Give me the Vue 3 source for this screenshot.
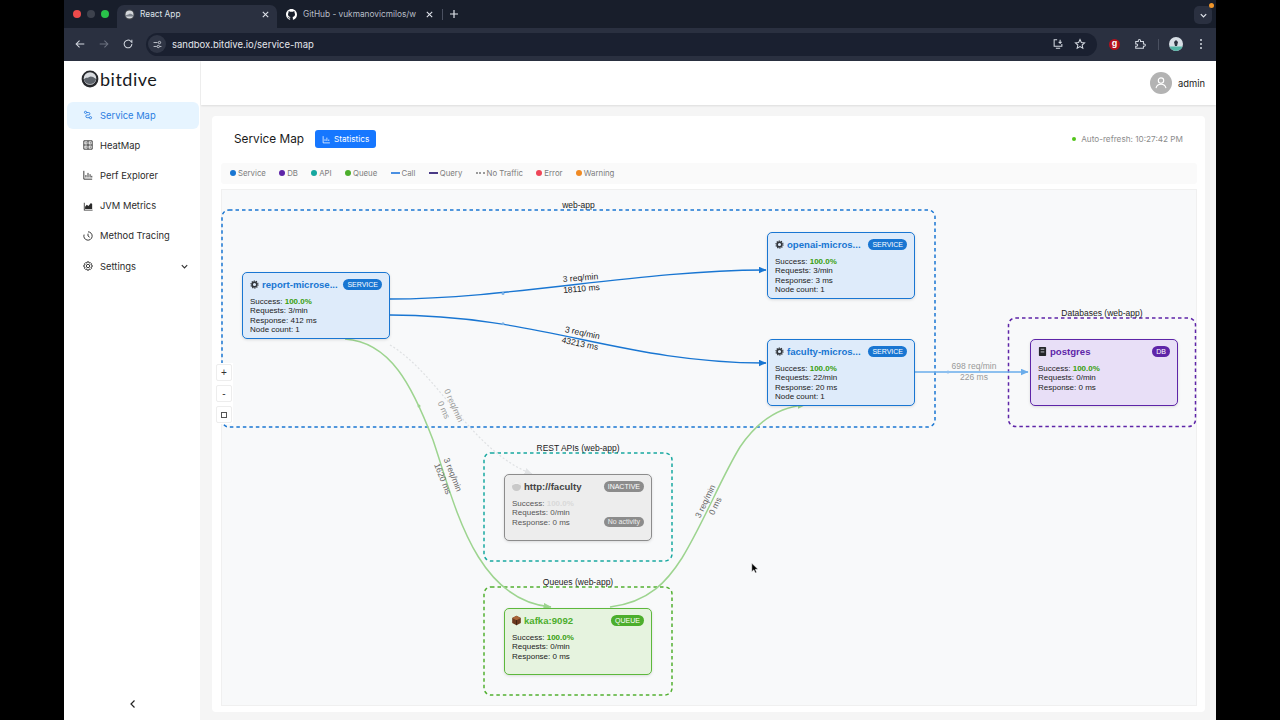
<template>
  <div class="screen">
    <div class="window">
      <div class="tabstrip">
        <div class="lights">
          <span class="light red"></span>
          <span class="light grey"></span>
          <span class="light green"></span>
        </div>
        <div class="tab active">
          <svg class="favicon" viewBox="0 0 16 16"><circle cx="8" cy="8" r="7.500" fill="#3b3f46" /><circle cx="8" cy="8" r="5.800" fill="#d5d8dc" /><path d="M2.500 9.500c2-2 3-1 4.500-2s3-1 6.500 1.500v2h-11z" fill="#7c828b" /></svg>
          <span class="tab-title">React App</span>
          <svg class="tab-x" viewBox="0 0 10 10"><path d="M2 2l6 6M8 2l-6 6" /></svg>
        </div>
        <div class="tab second">
          <svg class="favicon" viewBox="0 0 16 16"><path fill="#fff" d="M8 0C3.58 0 0 3.58 0 8c0 3.54 2.29 6.53 5.47 7.59.4.07.55-.17.55-.38 0-.19-.01-.82-.01-1.49-2.01.37-2.53-.49-2.69-.94-.09-.23-.48-.94-.82-1.13-.28-.15-.68-.52-.01-.53.63-.01 1.08.58 1.23.82.72 1.21 1.87.87 2.33.66.07-.52.28-.87.51-1.07-1.78-.2-3.64-.89-3.64-3.95 0-.87.31-1.59.82-2.15-.08-.2-.36-1.02.08-2.12 0 0 .67-.21 2.2.82.64-.18 1.32-.27 2-.27.68 0 1.36.09 2 .27 1.53-1.04 2.2-.82 2.2-.82.44 1.1.16 1.92.08 2.12.51.56.82 1.27.82 2.15 0 3.07-1.87 3.75-3.65 3.95.29.25.54.73.54 1.48 0 1.07-.01 1.93-.01 2.2 0 .21.15.46.55.38A8.013 8.013 0 0016 8c0-4.42-3.58-8-8-8z" /></svg>
          <span class="tab-title faded">GitHub - vukmanovicmilos/w</span>
          <svg class="tab-x" viewBox="0 0 10 10"><path d="M2 2l6 6M8 2l-6 6" /></svg>
        </div>
        <span class="tab-sep"></span>
        <svg class="tab-plus" viewBox="0 0 10 10"><path d="M5 1v8M1 5h8" /></svg>
        <div class="tab-menu">
          <svg viewBox="0 0 10 10"><path d="M2 3.500l3 3 3-3" /></svg>
          <span class="tab-menu-dot"></span>
        </div>
      </div>

      <div class="toolbar">
        <svg class="tool" viewBox="0 0 14 14"><path d="M12 7H2.500M6.500 3L2.500 7l4 4" /></svg>
        <svg class="tool dim" viewBox="0 0 14 14"><path d="M2 7h9.500M7.500 3l4 4-4 4" /></svg>
        <svg class="tool" viewBox="0 0 14 14"><path d="M11.500 7a4.500 4.500 0 1 1-1.300-3.200L11.500 5V2" /></svg>
        <div class="omnibox">
          <span class="site-icon">
            <svg viewBox="0 0 14 14"><path d="M2 4.500h5M10 9.500h2M2 9.500h4" /><circle cx="9.500" cy="4.500" r="1.500" /><circle cx="8" cy="9.500" r="1.500" /></svg>
          </span>
          <span class="url">sandbox.bitdive.io/service-map</span>
          <svg class="tool omni-end" viewBox="0 0 14 14"><path d="M6 2H2.500v7.500h9V7M4.500 12h5M9.500 2v4M7.800 4.500l1.700 1.700 1.700-1.700" /></svg>
          <svg class="tool star" viewBox="0 0 14 14"><path d="M7 1.800l1.600 3.500 3.700.4-2.800 2.500.8 3.700L7 10l-3.300 1.900.8-3.700-2.800-2.500 3.700-.4z" /></svg>
        </div>
        <span class="ext-g">g</span>
        <svg class="tool puzzle" viewBox="0 0 14 14"><path d="M2 4h3V3a1.300 1.300 0 0 1 2.600 0v1H11v3h1a1.300 1.300 0 0 1 0 2.600h-1V12H2V9.500h1a1.300 1.300 0 0 0 0-2.600H2z" /></svg>
        <span class="tool-sep"></span>
        <svg class="avatar-mini" viewBox="0 0 14 14"><circle cx="7" cy="7" r="7" fill="#d8dfe6" /><path d="M0.500 9.500h13A7 7 0 0 1 0.500 9.500z" fill="#55b5a6" /><path d="M7 3l2 2-1 4H6L5 5z" fill="#2d3340" /></svg>
        <span class="kebab"><i></i><i></i><i></i></span>
      </div>

      <div class="app">
        <aside class="sidebar">
          <div class="logo">
            <svg class="logo-mark" viewBox="0 0 18 18">
              <circle cx="9" cy="9" r="8.400" fill="#26282c" />
              <circle cx="9" cy="8.500" r="6.300" fill="#d9dce0" />
              <path d="M2.800 9.500c2-2.500 3.500-1 5-2.200s3.500-1.300 7.400 1.800c-.6 3-3 5-6.200 5s-5.500-2-6.200-4.600z" fill="#5d636b" />
            </svg>
            <span class="logo-text">bitdive</span>
          </div>
          <nav class="menu">
            <a v-for="item in menu" :key="item.label" class="menu-item" :class="{ active: item.active }">
              <svg class="menu-icon" :class="{ solid: item.solid }" viewBox="0 0 12 12">
                <path :d="item.icon" />
              </svg>
              <span>{{ item.label }}</span>
              <svg v-if="item.more" class="menu-more" viewBox="0 0 10 10"><path d="M2 3.500l3 3 3-3" /></svg>
            </a>
          </nav>
          <svg class="collapse" viewBox="0 0 10 10"><path d="M6.500 1.500L3 5l3.500 3.500" /></svg>
        </aside>

        <main class="main">
          <header class="topbar">
            <span class="user-avatar">
              <svg viewBox="0 0 20 20"><circle cx="10" cy="7" r="3.400" /><path d="M3.800 16.500c.6-3.500 3-5 6.200-5s5.600 1.500 6.200 5" /></svg>
            </span>
            <span class="user-name">admin</span>
          </header>

          <div class="content">
            <section class="card">
              <div class="title-row">
                <h1>Service Map</h1>
                <button class="stats-btn">
                  <svg viewBox="0 0 12 12"><path d="M1.500 1.500v9h9M4 8V5.500M6.500 8V3.500M9 8V6" /></svg>
                  Statistics
                </button>
                <span class="refresh"><i></i>Auto-refresh: 10:27:42 PM</span>
              </div>

              <div class="legend">
                <span v-for="l in legend" :key="l.label" class="legend-item">
                  <i :class="l.type" :style="{ '--c': l.color }"></i>{{ l.label }}
                </span>
              </div>

              <div class="canvas">
                <svg class="edges" viewBox="221 189 976 517">
                  <defs>
                    <marker id="blue" markerWidth="9" markerHeight="8" refX="7.500" refY="3.500" orient="auto" markerUnits="userSpaceOnUse">
                      <path d="M0 0L8 3.500L0 7z" fill="#1976d2" />
                    </marker>
                    <marker id="light" markerWidth="9" markerHeight="8" refX="7.500" refY="3.500" orient="auto" markerUnits="userSpaceOnUse">
                      <path d="M0 0L8 3.500L0 7z" fill="#6aaceb" />
                    </marker>
                    <marker id="green" markerWidth="9" markerHeight="8" refX="7.500" refY="3.500" orient="auto" markerUnits="userSpaceOnUse">
                      <path d="M0 0L8 3.500L0 7z" fill="#9dd48f" />
                    </marker>
                    <marker id="none" markerWidth="9" markerHeight="8" refX="7.500" refY="3.500" orient="auto" markerUnits="userSpaceOnUse">
                      <path d="M0 0L8 3.500L0 7z" fill="#e2e4e6" />
                    </marker>
                  </defs>

                  <g v-for="g in groups" :key="g.label">
                    <rect class="group" :x="g.x" :y="g.y" :width="g.w" :height="g.h" rx="7" :stroke="g.color" />
                    <text class="group-label" :x="g.x + g.w / 2" :y="g.y - 2.500">{{ g.label }}</text>
                  </g>

                  <path v-for="e in edges" :key="e.d" class="edge" :d="e.d" :stroke="e.color" :stroke-width="e.width" :stroke-dasharray="e.dash" :marker-end="`url(#${e.marker})`" />
                  <circle v-for="p in pulses" :key="p.x + p.y" :cx="p.x" :cy="p.y" r="1.500" :fill="p.color" />

                  <g v-for="t in edgeLabels" :key="t.top + t.x" :transform="`translate(${t.x} ${t.y}) rotate(${t.rot})`" :class="['edge-label', t.tone]">
                    <text y="-3.500">{{ t.top }}</text>
                    <text y="7.500">{{ t.bottom }}</text>
                  </g>
                </svg>

                <div
                  v-for="n in nodes"
                  :key="n.name"
                  class="node"
                  :class="n.kind"
                  :style="{ left: n.x - 221 + 'px', top: n.y - 189 + 'px' }"
                >
                  <div class="node-head">
                    <svg v-if="n.icon === 'gear'" class="node-icon" viewBox="0 0 12 12">
                      <circle cx="6" cy="6" r="3.200" fill="none" stroke="#33373d" stroke-width="2.200" />
                      <circle cx="6" cy="6" r="4.800" fill="none" stroke="#33373d" stroke-width="1.400" stroke-dasharray="1.600 1.400" />
                    </svg>
                    <svg v-else-if="n.icon === 'db'" class="node-icon big" viewBox="0 0 12 12">
                      <rect x="2" y="1" width="8" height="10" rx=".8" fill="#24262a" />
                      <path d="M4 3.500h4M4 6.500h4" stroke="#c9c9d2" stroke-width="1" />
                    </svg>
                    <svg v-else-if="n.icon === 'ball'" class="node-icon big" viewBox="0 0 12 12">
                      <circle cx="6" cy="6" r="5" fill="#c9c9c9" />
                      <path d="M1.200 5c1.500-2.500 8-2.500 9.600 0V3.500L8 1H4L1.200 3.500z" fill="#f0f0f0" />
                    </svg>
                    <svg v-else class="node-icon big" viewBox="0 0 12 12">
                      <path d="M6 .8l4.800 2.400v5.600L6 11.200 1.200 8.800V3.200z" fill="#6b3a1f" />
                      <path d="M1.200 3.200L6 5.600l4.800-2.400L6 .8z" fill="#a9683a" />
                      <path d="M6 5.600v5.600" stroke="#2f1a0d" stroke-width=".8" />
                    </svg>
                    <span class="node-name">{{ n.name }}</span>
                    <span class="badge">{{ n.badge }}</span>
                  </div>
                  <div class="node-stats">
                    <div>Success: <b>100.0%</b></div>
                    <div>Requests: {{ n.requests }}</div>
                    <div>Response: {{ n.response }}</div>
                    <div v-if="n.count">Node count: {{ n.count }}</div>
                  </div>
                  <span v-if="n.kind === 'inactive'" class="no-activity">No activity</span>
                </div>

                <div class="zoom-controls">
                  <button>+</button>
                  <button>-</button>
                  <button><span class="fit"></span></button>
                </div>

                <svg class="cursor" viewBox="0 0 10 14"><path d="M1 0.500v10.500l2.600-2.300 1.700 3.800 1.700-.8-1.700-3.700h3.400z" fill="#000" stroke="#fff" stroke-width=".6" /></svg>
              </div>
            </section>
          </div>
        </main>
      </div>
    </div>
  </div>
</template>

<script setup>
const menu = [
  { label: 'Service Map', active: true, icon: 'M3 1.500a1.300 1.300 0 1 0 0 2.600a1.300 1.300 0 1 0 0-2.600M9 7.900a1.300 1.300 0 1 0 0 2.600a1.300 1.300 0 1 0 0-2.600M4.300 3h2.500a1.500 1.500 0 0 1 0 3H5a1.500 1.500 0 0 0 0 3.200h2.700' },
  { label: 'HeatMap', icon: 'M1 1h10v10H1zM1 6h10M6 1v10M3 3.500h1.500M8 3.500h1.500M3 8.500h1.500M8 8.500h1.500' },
  { label: 'Perf Explorer', icon: 'M1 1v10h10M3.500 9V6M6 9V3.500M8.500 9V5M10.500 9V7' },
  { label: 'JVM Metrics', solid: true, icon: 'M1 2v9.500h10.500v-1H2V2zM2.500 9.500V7l2-2.500 2 1.500 3-3.500 1.500 1v6z' },
  { label: 'Method Tracing', icon: 'M6 1a5 5 0 1 1-4.700 3.300M6 3.200V6l2 1.500' },
  { label: 'Settings', more: true, icon: 'M6 4a2 2 0 1 0 0 4a2 2 0 1 0 0-4M5 1h2l.4 1.500 1.400-.6 1.400 1.400-.7 1.300L11 5v2l-1.500.4.700 1.400-1.400 1.400-1.400-.7L7 11H5l-.4-1.500-1.400.7-1.400-1.400.7-1.400L1 7V5l1.500-.4-.7-1.300 1.400-1.400 1.400.6z' }
]

const legend = [
  { label: 'Service', type: 'dot', color: '#1976d2' },
  { label: 'DB', type: 'dot', color: '#5e25a8' },
  { label: 'API', type: 'dot', color: '#17a8a0' },
  { label: 'Queue', type: 'dot', color: '#4cae2c' },
  { label: 'Call', type: 'line', color: '#4a90e2' },
  { label: 'Query', type: 'line', color: '#4a3a86' },
  { label: 'No Traffic', type: 'dots', color: '#9a9a9a' },
  { label: 'Error', type: 'dot', color: '#ee4658' },
  { label: 'Warning', type: 'dot', color: '#f08a24' }
]

const groups = [
  { label: 'web-app', x: 222, y: 210, w: 713, h: 217, color: '#1976d2' },
  { label: 'Databases (web-app)', x: 1008.500, y: 318, w: 187, h: 108.500, color: '#5e25a8' },
  { label: 'REST APIs (web-app)', x: 484, y: 453, w: 188, h: 108, color: '#17a8a0' },
  { label: 'Queues (web-app)', x: 484, y: 587, w: 188, h: 108, color: '#52b030' }
]

const edges = [
  { d: 'M390 299C510 299 640 270 766 270', color: '#1976d2', width: 1.300, marker: 'blue' },
  { d: 'M390 315C540 315 620 363 766 363', color: '#1976d2', width: 1.300, marker: 'blue' },
  { d: 'M345 339C390 342 412 385 433 440C455 505 475 600 551 607', color: '#9dd48f', width: 1.500, marker: 'green' },
  { d: 'M610 607C650 602 668 580 682 558C705 520 720 480 740 447C755 425 775 407 805 405', color: '#9dd48f', width: 1.500, marker: 'green' },
  { d: 'M390 345C440 375 470 450 532 474', color: '#dfe1e3', width: 1.200, dash: '2 2', marker: 'none' },
  { d: 'M915 372H1028', color: '#6aaceb', width: 1.600, marker: 'light' }
]

// moving traffic dots caught on the edges
const pulses = [
  { x: 503, y: 293.500, color: '#7fb4e8' },
  { x: 503, y: 323.800, color: '#7fb4e8' },
  { x: 419, y: 406, color: '#9dd48f' },
  { x: 948, y: 372, color: '#8fc0ef' }
]

const edgeLabels = [
  { x: 581, y: 284, rot: -5, top: '3 req/min', bottom: '18110 ms', tone: 'dark' },
  { x: 581, y: 339, rot: 12, top: '3 req/min', bottom: '43213 ms', tone: 'dark' },
  { x: 974, y: 372, rot: 0, top: '698 req/min', bottom: '226 ms', tone: 'soft' },
  { x: 448, y: 408, rot: 66, top: '0 req/min', bottom: '0 ms', tone: 'soft' },
  { x: 447, y: 477, rot: 68, top: '3 req/min', bottom: '1620 ms', tone: 'mid' },
  { x: 711, y: 504, rot: -64, top: '3 req/min', bottom: '0 ms', tone: 'mid' }
]

const nodes = [
  { name: 'report-microse...', kind: 'service', icon: 'gear', badge: 'SERVICE', x: 242, y: 272, requests: '3/min', response: '412 ms', count: 1 },
  { name: 'openai-micros...', kind: 'service', icon: 'gear', badge: 'SERVICE', x: 767, y: 232, requests: '3/min', response: '3 ms', count: 1 },
  { name: 'faculty-micros...', kind: 'service', icon: 'gear', badge: 'SERVICE', x: 767, y: 339, requests: '22/min', response: '20 ms', count: 1 },
  { name: 'postgres', kind: 'db', icon: 'db', badge: 'DB', x: 1030, y: 339, requests: '0/min', response: '0 ms' },
  { name: 'http://faculty', kind: 'inactive', icon: 'ball', badge: 'INACTIVE', x: 504, y: 474, requests: '0/min', response: '0 ms' },
  { name: 'kafka:9092', kind: 'queue', icon: 'box', badge: 'QUEUE', x: 504, y: 608, requests: '0/min', response: '0 ms' }
]
</script>

<style>
html,
body {
  margin: 0;
  background: #000;
}
</style>

<style scoped>
.screen {
  width: 1280px;
  height: 720px;
  background: #000;
  overflow: hidden;
  font-family: Inter, "Liberation Sans", sans-serif;
}

.window {
  width: 1152px;
  height: 720px;
  margin-left: 64px;
  display: flex;
  flex-direction: column;
  background: #f5f5f5;
}

/* browser chrome */
.tabstrip {
  height: 28px;
  flex: none;
  display: flex;
  align-items: flex-end;
  background: #181e2b;
  color: #dfe3ea;
  font-size: 8.300px;
}

.lights {
  display: flex;
  gap: 6px;
  width: 53px;
  padding: 0 0 10px 9px;
  box-sizing: border-box;
}

.light {
  width: 8px;
  height: 8px;
  border-radius: 50%;
}

.red { background: #ee4b4b; }
.grey { background: #3d424d; }
.green { background: #29c34a; }

.tab {
  width: 160px;
  height: 23px;
  display: flex;
  align-items: center;
  box-sizing: border-box;
  padding: 0 7px 5px 7px;
  gap: 5px;
}

.tab.active {
  background: #2a3040;
  border-radius: 7px 7px 0 0;
}

.tab.second {
  width: 163px;
  padding: 0 6px 5px 9px;
  gap: 6px;
}

.favicon {
  width: 11px;
  height: 11px;
  flex: none;
}

.tab-title {
  flex: 1;
  min-width: 0;
  white-space: nowrap;
}

.tab-title.faded {
  color: #b9bec8;
  font-size: 8.300px;
}

.tab-x {
  width: 9px;
  height: 9px;
  flex: none;
  fill: none;
  stroke: #dfe3ea;
  stroke-width: 1.200;
}

.tab-sep {
  width: 1px;
  height: 11px;
  background: #4a5060;
  margin: 0 6px 8px 2px;
}

.tab-plus {
  width: 10px;
  height: 10px;
  margin-bottom: 9px;
  fill: none;
  stroke: #dfe3ea;
  stroke-width: 1.200;
}

.tab-menu {
  position: relative;
  width: 18px;
  height: 18px;
  margin: 0 4px 4px auto;
  border-radius: 5px;
  background: #2a3040;
  display: flex;
  align-items: center;
  justify-content: center;
}

.tab-menu svg {
  width: 9px;
  height: 9px;
  fill: none;
  stroke: #dfe3ea;
  stroke-width: 1.400;
}

.tab-menu-dot {
  position: absolute;
  top: -3px;
  right: -2px;
  width: 5px;
  height: 5px;
  border-radius: 50%;
  background: #f0962b;
}

.toolbar {
  height: 33px;
  flex: none;
  display: flex;
  align-items: center;
  box-sizing: border-box;
  padding: 0 10px 1px;
  background: #2a3040;
  gap: 12px;
}

.tool {
  width: 12px;
  height: 12px;
  flex: none;
  fill: none;
  stroke: #d3d8e0;
  stroke-width: 1.200;
}

.tool.dim {
  stroke: #6c7280;
}

.omnibox {
  width: 951px;
  height: 23px;
  flex: none;
  display: flex;
  align-items: center;
  gap: 8px;
  border-radius: 12px;
  background: #1a2030;
  color: #e4e7ec;
  font-size: 9.500px;
}

.site-icon {
  width: 18px;
  height: 18px;
  margin: 0 -2px 0 2px;
  border-radius: 50%;
  background: #2f3545;
  display: flex;
  align-items: center;
  justify-content: center;
}

.site-icon svg {
  width: 11px;
  height: 11px;
  fill: none;
  stroke: #dfe3ea;
  stroke-width: 1;
}

.url {
  flex: 1;
}

.omni-end {
  margin-right: 2px;
}

.star {
  margin-right: 11px;
}

.ext-g {
  width: 11px;
  height: 11px;
  flex: none;
  border-radius: 50%;
  background: #b3101c;
  color: #fff;
  font: bold 9px/9px "Liberation Sans", sans-serif;
  text-align: center;
}

.puzzle {
  margin-left: 2px;
}

.tool-sep {
  width: 1px;
  height: 11px;
  background: #4a5060;
}

.avatar-mini {
  width: 14px;
  height: 14px;
  flex: none;
  margin-left: -2px;
}

.kebab {
  display: flex;
  flex-direction: column;
  gap: 2px;
  margin-left: 5px;
}

.kebab i {
  width: 2px;
  height: 2px;
  border-radius: 50%;
  background: #d3d8e0;
}

/* app */
.app {
  flex: 1;
  display: flex;
  min-height: 0;
}

.sidebar {
  position: relative;
  width: 136px;
  flex: none;
  background: #fff;
  box-sizing: border-box;
  padding: 0 1px 0 3px;
  display: flex;
  flex-direction: column;
}

.logo {
  height: 41px;
  flex: none;
  display: flex;
  align-items: center;
  gap: 1px;
  padding: 0 0 5px 14px;
  box-sizing: border-box;
}

.logo-mark {
  width: 18px;
  height: 18px;
}

.logo-text {
  font-family: Lato, sans-serif;
  font-size: 18px;
  letter-spacing: .5px;
  color: #17191c;
}

.menu {
  display: flex;
  flex-direction: column;
  gap: 3px;
}

.menu-item {
  height: 27.200px;
  display: flex;
  align-items: center;
  gap: 7px;
  padding: 0 10px 1px 16px;
  box-sizing: border-box;
  border-radius: 6px;
  font-size: 9.400px;
  color: #2b2b2b;
}

.menu-item.active {
  background: #e6f4ff;
  color: #2a7de1;
}

.menu-icon {
  width: 10px;
  height: 10px;
  flex: none;
  fill: none;
  stroke: currentColor;
  stroke-width: 1.100;
}

.menu-icon.solid {
  fill: currentColor;
  stroke: none;
}

.menu-more {
  width: 9px;
  height: 9px;
  margin-left: auto;
  fill: none;
  stroke: #333;
  stroke-width: 1.300;
}

.collapse {
  position: absolute;
  left: 64px;
  bottom: 11px;
  width: 10px;
  height: 10px;
  fill: none;
  stroke: #222;
  stroke-width: 1.200;
}

.main {
  flex: 1;
  min-width: 0;
  margin-left: 1px;
  display: flex;
  flex-direction: column;
}

.topbar {
  height: 44px;
  flex: none;
  display: flex;
  align-items: center;
  justify-content: flex-end;
  gap: 6px;
  padding-right: 11px;
  background: #fff;
  box-shadow: 0 1px 2px rgba(0, 0, 0, .1);
}

.user-avatar {
  width: 22px;
  height: 22px;
  border-radius: 50%;
  background: #b3b3b3;
  display: flex;
  align-items: center;
  justify-content: center;
}

.user-avatar svg {
  width: 16px;
  height: 16px;
  fill: none;
  stroke: #fff;
  stroke-width: 1.400;
}

.user-name {
  font-size: 9.400px;
  color: #222;
}

.content {
  flex: 1;
  padding: 11px 11px 8px;
  min-height: 0;
}

.card {
  height: 100%;
  box-sizing: border-box;
  padding: 0 8px 6px 9px;
  background: #fff;
  border-radius: 4px;
  display: flex;
  flex-direction: column;
}

.title-row {
  height: 47px;
  flex: none;
  display: flex;
  align-items: center;
  padding: 0 14px 1px 13px;
  box-sizing: border-box;
}

.title-row h1 {
  margin: 0 11px 0 0;
  font-size: 11.800px;
  font-weight: 400;
  color: #1a1a1a;
}

.stats-btn {
  height: 18px;
  padding: 0 7px;
  display: flex;
  align-items: center;
  gap: 3px;
  border: 0;
  border-radius: 3px;
  background: #1677ff;
  color: #fff;
  font-family: inherit;
  font-size: 8.200px;
}

.stats-btn svg {
  width: 9px;
  height: 9px;
  fill: none;
  stroke: #fff;
  stroke-width: 1;
}

.refresh {
  margin-left: auto;
  display: flex;
  align-items: center;
  gap: 5px;
  font-size: 8.200px;
  color: #8c8c8c;
}

.refresh i {
  width: 4px;
  height: 4px;
  border-radius: 50%;
  background: #52c41a;
}

.legend {
  height: 21px;
  flex: none;
  display: flex;
  align-items: center;
  gap: 13.300px;
  padding: 0 0 1px 9px;
  box-sizing: border-box;
  margin-bottom: 5px;
  background: #fafafa;
  border-radius: 3px;
  font-size: 7.800px;
  color: #7d7d7d;
}

.legend-item {
  display: flex;
  align-items: center;
  gap: 2px;
}

.legend-item i {
  display: block;
  flex: none;
}

.legend-item .dot {
  width: 6px;
  height: 6px;
  border-radius: 50%;
  background: var(--c);
}

.legend-item .line {
  width: 9px;
  height: 2px;
  background: var(--c);
}

.legend-item .dots {
  width: 9px;
  border-top: 2px dotted var(--c);
}

.canvas {
  position: relative;
  flex: 1;
  min-height: 0;
  background: #f8f9fa;
  box-shadow: inset 0 0 0 1px #f0f0f0;
}

.edges {
  position: absolute;
  inset: 0;
  width: 100%;
  height: 100%;
  overflow: visible;
}

.group {
  fill: none;
  stroke-width: 1.500;
  stroke-dasharray: 3.500 3;
}

.group-label {
  font-family: "Liberation Sans", sans-serif;
  font-size: 8.500px;
  text-anchor: middle;
  fill: #222;
}

.edge {
  fill: none;
}

.edge-label text {
  font-family: "Liberation Sans", sans-serif;
  font-size: 8.500px;
  text-anchor: middle;
}

.edge-label.dark text { fill: #222; }
.edge-label.mid text { fill: #666; }
.edge-label.soft text { fill: #999; }

.node {
  position: absolute;
  width: 148px;
  height: 67px;
  box-sizing: border-box;
  padding: 4px 7px;
  border: 1.500px solid;
  border-radius: 5px;
  font-family: "Liberation Sans", sans-serif;
  font-size: 8px;
  color: #222;
  box-shadow: 0 1px 3px rgba(0, 0, 0, .12);
}

.node.service { background: #deebfa; border-color: #1976d2; --accent: #1976d2; }
.node.db { background: #e8dff7; border-color: #5e25a8; --accent: #5e25a8; }
.node.inactive { background: #ededed; border-color: #8c8c8c; --accent: #8c8c8c; }
.node.queue { background: #e6f3df; border-color: #5db83c; --accent: #4cae2c; }

.node-head {
  height: 14px;
  display: flex;
  align-items: center;
  gap: 3px;
  margin-bottom: 6px;
}

.node-icon {
  width: 9px;
  height: 9px;
  flex: none;
}

.node-icon.big {
  transform: scale(1.200);
}

.node-name {
  flex: 1;
  font-size: 9.600px;
  font-weight: 700;
  white-space: nowrap;
  color: var(--accent);
}

.node.inactive .node-name {
  color: #444;
}

.badge {
  height: 11px;
  padding: 0 4px;
  border-radius: 6px;
  background: var(--accent);
  color: #fff;
  font-size: 7px;
  line-height: 11px;
}

.node-stats {
  line-height: 9.300px;
  white-space: nowrap;
}

.node-stats b {
  color: #389e0d;
}

.node.inactive .node-stats {
  color: #555;
}

.node.inactive .node-stats b {
  color: #d9d9d9;
}

.no-activity {
  position: absolute;
  right: 7px;
  bottom: 13px;
  height: 10px;
  padding: 0 4px;
  border-radius: 5px;
  background: #8c8c8c;
  color: #eee;
  font-size: 7px;
  line-height: 10px;
}

.zoom-controls {
  position: absolute;
  left: -6px;
  top: 174px;
  width: 18px;
  padding: 1px;
  display: flex;
  flex-direction: column;
  gap: 4px;
  box-sizing: border-box;
  background: #fff;
}

.zoom-controls button {
  width: 16px;
  height: 17px;
  padding: 0;
  display: flex;
  align-items: center;
  justify-content: center;
  border: 1px solid #ededed;
  border-radius: 2px;
  background: #fff;
  color: #333;
  font-family: "Liberation Sans", sans-serif;
  font-size: 10px;
  line-height: 1;
}

.fit {
  width: 6px;
  height: 6px;
  box-sizing: border-box;
  border: 1px solid #555;
}

.cursor {
  position: absolute;
  left: 530px;
  top: 373px;
  width: 8px;
  height: 13px;
}
</style>
